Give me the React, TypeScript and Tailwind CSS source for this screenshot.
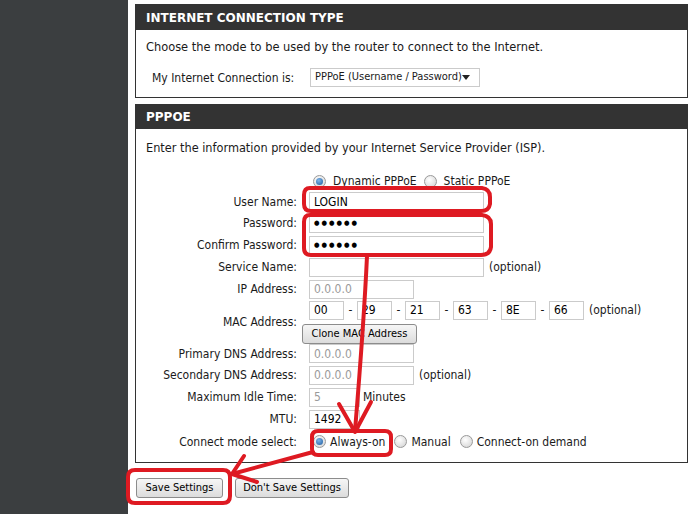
import { FC, ReactNode } from "react";

const Radio: FC<{ checked?: boolean }> = ({ checked }) => (
  <span className="flex h-[13px] w-[13px] shrink-0 items-center justify-center rounded-full border border-[#9a9a9a] bg-[radial-gradient(circle_at_40%_35%,#ffffff,#d0d0d0)]">
    {checked && (
      <span className="h-[7px] w-[7px] rounded-full bg-[radial-gradient(circle_at_40%_35%,#7fb6ea,#1d5a9c)]" />
    )}
  </span>
);

const Field: FC<{ w: string; children?: ReactNode; muted?: boolean }> = ({
  w,
  children,
  muted,
}) => (
  <div
    className={`flex h-[19px] items-center border border-[#cbcbcb] bg-white pl-[4px] text-[12px] ${w} ${
      muted ? "text-[#9a9a9a]" : "text-black"
    }`}
  >
    {children}
  </div>
);

const Row: FC<{ label: string; h: string; children?: ReactNode }> = ({
  label,
  h,
  children,
}) => (
  <div className={`flex items-center ${h}`}>
    <div className="w-[161px] shrink-0 text-right">{label}</div>
    <div className="ml-[12px] flex items-center">{children}</div>
  </div>
);

const Button: FC<{ w: string; children: ReactNode }> = ({ w, children }) => (
  <button
    className={`h-[20px] rounded-[3px] border border-[#8c8c8c] bg-[linear-gradient(#f6f6f6,#dcdcdc)] text-[11px] leading-[18px] text-black ${w}`}
  >
    {children}
  </button>
);

const Dots = () => (
  <span className="text-[7px] font-bold tracking-[2px]">●●●●●●</span>
);

const MacBox: FC<{ v: string }> = ({ v }) => <Field w="w-[35px]">{v}</Field>;
const Dash = () => <span className="w-[13px] text-center">-</span>;

const Annotations = () => (
  <svg
    className="pointer-events-none absolute inset-0"
    width="700"
    height="514"
    viewBox="0 0 700 514"
    fill="none"
    stroke="#de1a22"
    strokeWidth="4"
    strokeLinecap="round"
    strokeLinejoin="round"
  >
    {/* user name box */}
    <path d="M310 188 H482 Q490 189 490 197 V204 Q489 211 481 211 H311 Q304 211 304 204 V195 Q304 188 310 188 Z" />
    {/* password boxes */}
    <path d="M310 215 H482 Q491 216 491 224 V247 Q490 255 481 255 H311 Q304 255 304 248 V222 Q304 215 310 215 Z" />
    {/* arrow down to connect mode */}
    <path d="M367 256 C365 300 360 370 355 431" />
    <path d="M339 404 L355 432 L371 402" />
    {/* always-on box */}
    <path d="M318 431 H385 Q391 431 391 437 V449 Q391 455 385 455 H318 Q312 455 312 449 V437 Q312 431 318 431 Z" />
    {/* arrow to save */}
    <path d="M313 452 L232 474" />
    <path d="M244 456 L232 474 L257 482" />
    {/* save box */}
    <path d="M135 470 H223 Q230 470 230 477 V496 Q230 503 223 503 H135 Q128 503 128 496 V477 Q128 470 135 470 Z" />
  </svg>
);

const App: FC = () => {
  return (
    <div className="relative flex h-[514px] w-[700px] overflow-hidden bg-white font-['DejaVu_Sans_Condensed','DejaVu_Sans',sans-serif] text-[12px] text-[#1a1a1a]">
      <div className="w-[128px] shrink-0 bg-[#3b3e40]" />

      <div className="flex-1 pl-[7px] pt-[4px]">
        <section className="w-[553px] border border-[#333]">
          <h2 className="h-[25px] bg-[#333] px-[10px] font-['DejaVu_Sans',sans-serif] text-[12px] font-bold leading-[26px] text-white">
            INTERNET CONNECTION TYPE
          </h2>
          <div className="px-[10px] pt-[8px] pb-[10px]">
            <p className="h-[18px] text-[12.7px] leading-[18px]">
              Choose the mode to be used by the router to connect to the Internet.
            </p>
            <div className="mt-[12px] flex h-[19px] items-center pl-[6px]">
              <span className="w-[148px] shrink-0">My Internet Connection is:</span>
              <div className="ml-[10px] flex h-[19px] w-[170px] items-center justify-between border border-[#cbcbcb] pl-[4px] pr-[9px] text-[11px]">
                <span>PPPoE (Username / Password)</span>
                <svg width="8" height="5" viewBox="0 0 8 5">
                  <path d="M0 0 H8 L4 5 Z" fill="#222" />
                </svg>
              </div>
            </div>
          </div>
        </section>

        <section className="mt-[6px] w-[553px] border border-[#333]">
          <h2 className="h-[24px] bg-[#333] px-[10px] font-['DejaVu_Sans',sans-serif] text-[12px] font-bold leading-[25px] text-white">
            PPPOE
          </h2>
          <div className="pt-[10px] pb-[9px]">
            <p className="h-[18px] px-[10px] text-[12.6px] leading-[18px]">
              Enter the information provided by your Internet Service Provider (ISP).
            </p>
            <div className="mt-[14px] flex flex-col">
              <Row label="" h="h-[20px]">
                <span className="ml-[4px] flex items-center gap-[7px]">
                  <Radio checked />
                  <span>Dynamic PPPoE</span>
                  <Radio />
                  <span>Static PPPoE</span>
                </span>
              </Row>
              <Row label="User Name:" h="h-[21px]">
                <Field w="w-[175px]">LOGIN</Field>
              </Row>
              <Row label="Password:" h="h-[22px]">
                <Field w="w-[175px]">
                  <Dots />
                </Field>
              </Row>
              <Row label="Confirm Password:" h="h-[22px]">
                <Field w="w-[175px]">
                  <Dots />
                </Field>
              </Row>
              <Row label="Service Name:" h="h-[22px]">
                <Field w="w-[175px]" />
                <span className="ml-[5px]">(optional)</span>
              </Row>
              <Row label="IP Address:" h="h-[22px]">
                <Field w="w-[105px]" muted>
                  0.0.0.0
                </Field>
              </Row>
              <Row label="MAC Address:" h="h-[43px]">
                <div className="flex flex-col items-start gap-[4px] pt-[1px]">
                  <div className="flex items-center">
                    <MacBox v="00" />
                    <Dash />
                    <MacBox v="29" />
                    <Dash />
                    <MacBox v="21" />
                    <Dash />
                    <MacBox v="63" />
                    <Dash />
                    <MacBox v="8E" />
                    <Dash />
                    <MacBox v="66" />
                    <span className="ml-[5px]">(optional)</span>
                  </div>
                  <div className="-ml-[7px]">
                    <Button w="w-[115px] h-[17px] leading-[15px]">Clone MAC Address</Button>
                  </div>
                </div>
              </Row>
              <Row label="Primary DNS Address:" h="h-[21px]">
                <Field w="w-[105px]" muted>
                  0.0.0.0
                </Field>
              </Row>
              <Row label="Secondary DNS Address:" h="h-[22px]">
                <Field w="w-[105px]" muted>
                  0.0.0.0
                </Field>
                <span className="ml-[5px]">(optional)</span>
              </Row>
              <Row label="Maximum Idle Time:" h="h-[22px]">
                <Field w="w-[51px]" muted>
                  5
                </Field>
                <span className="ml-[3px]">Minutes</span>
              </Row>
              <Row label="MTU:" h="h-[22px]">
                <Field w="w-[51px]">1492</Field>
              </Row>
              <Row label="Connect mode select:" h="h-[23px]">
                <span className="ml-[4px] flex items-center">
                  <Radio checked />
                  <span className="ml-[4px]">Always-on</span>
                  <span className="ml-[9px]">
                    <Radio />
                  </span>
                  <span className="ml-[4px]">Manual</span>
                  <span className="ml-[9px]">
                    <Radio />
                  </span>
                  <span className="ml-[4px]">Connect-on demand</span>
                </span>
              </Row>
            </div>
          </div>
        </section>

        <div className="ml-[1px] mt-[15px] flex gap-[12px]">
          <Button w="w-[87px]">Save Settings</Button>
          <Button w="w-[114px]">Don't Save Settings</Button>
        </div>
      </div>

      <Annotations />
    </div>
  );
};

export default App;
